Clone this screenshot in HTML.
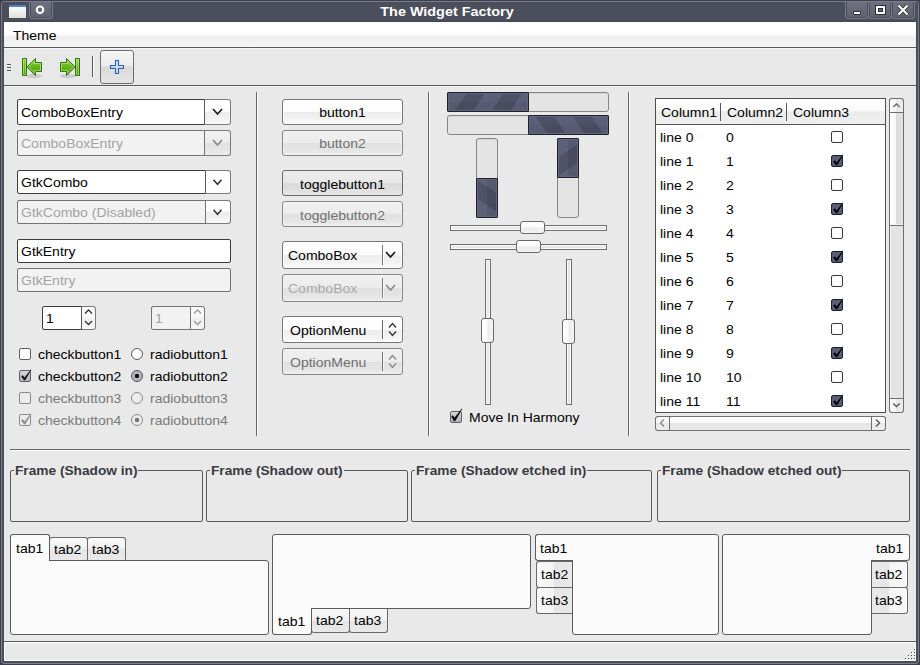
<!DOCTYPE html><html><head><meta charset="utf-8"><style>
*{box-sizing:border-box;margin:0;padding:0}
html,body{width:920px;height:665px;overflow:hidden}
body{position:relative;background:#4a4d5a;font-family:"Liberation Sans",sans-serif;font-size:14px;color:#000}
div{position:absolute}
.t{white-space:nowrap;line-height:16px;height:16px;transform:scaleY(0.88);transform-origin:0 13px}
svg{position:absolute;overflow:visible}
</style></head><body>
<div style="left:0px;top:0px;width:920px;height:665px;background:#3d404c"></div>
<div style="left:1px;top:1px;width:918px;height:663px;background:#4b4e5b;border:1px solid #7a7d89;border-radius:3px"></div>
<div style="left:4px;top:22px;width:912px;height:639px;background:#e9e9e9"></div>
<div style="left:3px;top:21px;width:914px;height:1px;background:#434652"></div>
<div class="t" style="left:296px;top:3px;width:302px;text-align:center;color:#fff;font-weight:bold;font-size:14.4px">The Widget Factory</div>
<div style="left:9px;top:5px;width:17px;height:13px;background:linear-gradient(#fbfbfb,#dedfd8);border-top:2px solid #5582c0"></div>
<div style="left:29px;top:2px;width:24px;height:17px;background:linear-gradient(#6e717d,#5e616e);border:1px solid #7a7d89;border-top:none;border-radius:0 0 4px 4px;box-shadow:inset 1px 0 #4a4d59,inset -1px 0 #4a4d59,inset 0 -1px #4a4d59"></div>
<svg style="left:0;top:0" width="60" height="22"><circle cx="40" cy="9.8" r="3.25" fill="none" stroke="#fff" stroke-width="2.1"/></svg>
<div style="left:845px;top:2px;width:24px;height:17px;background:linear-gradient(#6e717d,#5e616e);border:1px solid #7a7d89;border-top:none;border-radius:0 0 4px 4px;box-shadow:inset 1px 0 #4a4d59,inset -1px 0 #4a4d59,inset 0 -1px #4a4d59"></div>
<div style="left:868px;top:2px;width:24px;height:17px;background:linear-gradient(#6e717d,#5e616e);border:1px solid #7a7d89;border-top:none;border-radius:0 0 4px 4px;box-shadow:inset 1px 0 #4a4d59,inset -1px 0 #4a4d59,inset 0 -1px #4a4d59"></div>
<div style="left:891px;top:2px;width:24px;height:17px;background:linear-gradient(#6e717d,#5e616e);border:1px solid #7a7d89;border-top:none;border-radius:0 0 4px 4px;box-shadow:inset 1px 0 #4a4d59,inset -1px 0 #4a4d59,inset 0 -1px #4a4d59"></div>
<div style="left:853px;top:11px;width:8px;height:4px;background:#fff;border:1px solid #2a2c35;border-radius:1px"></div>
<div style="left:876px;top:6px;width:9px;height:8px;border:2px solid #fff;box-shadow:0 0 0 1px #2a2c35,inset 0 0 0 1px #2a2c35"></div>
<svg style="left:0;top:0" width="920" height="22"><path d="M898.5 5.5 L907.5 14.5 M907.5 5.5 L898.5 14.5" stroke="#2a2c35" stroke-width="3.8"/><path d="M898.5 5.5 L907.5 14.5 M907.5 5.5 L898.5 14.5" stroke="#fff" stroke-width="2.2"/></svg>
<div style="left:4px;top:22px;width:912px;height:25px;background:linear-gradient(#ffffff 0%,#ffffff 45%,#eeeeee 60%,#f4f4f4 100%)"></div>
<div style="left:4px;top:47px;width:912px;height:1px;background:#5b5b5b"></div>
<div class="t" style="left:13px;top:27px;">Theme</div>
<div style="left:4px;top:48px;width:912px;height:37px;background:#e8e8e8;border-top:1px solid #f6f6f6"></div>
<div style="left:4px;top:85px;width:912px;height:1px;background:#585858"></div>
<div style="left:4px;top:86px;width:912px;height:1px;background:#f3f3f3"></div>
<div style="left:7px;top:64px;width:4px;height:1px;background:#555"></div>
<div style="left:7px;top:67px;width:4px;height:1px;background:#555"></div>
<div style="left:7px;top:70px;width:4px;height:1px;background:#555"></div>
<svg style="left:0;top:0" width="140" height="90">
<defs><linearGradient id="ga" x1="0" y1="0" x2="0" y2="1"><stop offset="0" stop-color="#8fd64a"/><stop offset="0.5" stop-color="#62b51c"/><stop offset="1" stop-color="#4a9a0a"/></linearGradient></defs>
<ellipse cx="34" cy="76" rx="8" ry="2.2" fill="#000" opacity="0.12"/>
<ellipse cx="68" cy="76" rx="8" ry="2.2" fill="#000" opacity="0.12"/>
<path d="M22.5 58.5 H26.5 V75.5 H22.5 Z" fill="url(#ga)" stroke="#35700a" stroke-width="1"/>
<path d="M26.8 67 L35.5 58.5 V62.5 H41.5 V71.5 H35.5 V75.5 Z" fill="url(#ga)" stroke="#35700a" stroke-width="1"/>
<path d="M75.5 58.5 H79.5 V75.5 H75.5 Z" fill="url(#ga)" stroke="#35700a" stroke-width="1"/>
<path d="M75.2 67 L66.5 58.5 V62.5 H60.5 V71.5 H66.5 V75.5 Z" fill="url(#ga)" stroke="#35700a" stroke-width="1"/>
<path d="M23.5 59.5 H25.5 V74.5 H23.5 Z M28.3 67 L34.5 61 V63.5 H40.5 V70.5 H34.5 V73 Z M76.5 59.5 H78.5 V74.5 H76.5 Z M73.7 67 L67.5 61 V63.5 H61.5 V70.5 H67.5 V73 Z" fill="none" stroke="#c8ef9a" stroke-opacity="0.6" stroke-width="1"/>
</svg>
<div style="left:92px;top:56px;width:1px;height:21px;background:#5a5a5a"></div>
<div style="left:93px;top:56px;width:1px;height:21px;background:#f8f8f8"></div>
<div style="left:100px;top:50px;width:34px;height:34px;border:1px solid #6e6e6e;border-radius:3px;background:linear-gradient(#f6f6f6 0%,#ececec 45%,#d9d9d9 50%,#e4e4e4 100%)"></div>
<svg style="left:0;top:0" width="140" height="90">
<path d="M115.5 60.5 H118.5 V65.5 H123.5 V68.5 H118.5 V73.5 H115.5 V68.5 H110.5 V65.5 H115.5 Z" fill="#bcd3ef" stroke="#3063ad" stroke-width="1.1"/><path d="M116.5 66.5 H122.5 M117 61.5 V72.5" stroke="#e6f0fb" stroke-width="0.8" opacity="0.7"/>
</svg>
<div style="left:256px;top:92px;width:1px;height:344px;background:#666"></div>
<div style="left:257px;top:92px;width:1px;height:344px;background:#fcfcfc"></div>
<div style="left:428px;top:92px;width:1px;height:344px;background:#666"></div>
<div style="left:429px;top:92px;width:1px;height:344px;background:#fcfcfc"></div>
<div style="left:628px;top:92px;width:1px;height:344px;background:#666"></div>
<div style="left:629px;top:92px;width:1px;height:344px;background:#fcfcfc"></div>
<div style="left:10px;top:449px;width:900px;height:1px;background:#666"></div>
<div style="left:10px;top:450px;width:900px;height:1px;background:#fcfcfc"></div>
<div style="left:17px;top:99px;width:188px;height:26px;background:#fff;border:1px solid #3b3b3b;border-radius:2px;border-radius:2px 0 0 2px"></div>
<div style="left:204px;top:99px;width:27px;height:26px;border:1px solid #7a7a7a;border-left-color:#5a5a5a;border-radius:0 3px 3px 0;background:linear-gradient(#ffffff 0%,#fcfcfc 50%,#ececec 50%,#f1f1f1 75%,#fbfbfb 100%)"></div>
<div class="t" style="left:21px;top:104px;">ComboBoxEntry</div>
<svg style="left:0;top:0" width="1" height="1"><path d="M213.0 109.0 L217.5 114.0 L222.0 109.0" fill="none" stroke="#222" stroke-width="1.8"/></svg>
<div style="left:17px;top:130px;width:188px;height:26px;background:#f2f2f2;border:1px solid #737373;border-radius:2px;border-radius:2px 0 0 2px"></div>
<div style="left:204px;top:130px;width:27px;height:26px;border:1px solid #7b7b7b;border-left-color:#737373;border-radius:0 3px 3px 0;background:linear-gradient(#f0f0f0 0%,#ececec 50%,#e0e0e0 50%,#e4e4e4 75%,#ececec 100%)"></div>
<div class="t" style="left:21px;top:135px;color:#a3a3a3">ComboBoxEntry</div>
<svg style="left:0;top:0" width="1" height="1"><path d="M213.0 140.0 L217.5 145.0 L222.0 140.0" fill="none" stroke="#8a8a8a" stroke-width="1.8"/></svg>
<div style="left:17px;top:170px;width:189px;height:24px;background:#fff;border:1px solid #3b3b3b;border-radius:2px;border-radius:2px 0 0 2px"></div>
<div style="left:205px;top:170px;width:26px;height:24px;border:1px solid #7a7a7a;border-left-color:#5a5a5a;border-radius:0 3px 3px 0;background:#fdfdfd"></div>
<div class="t" style="left:21px;top:174px;">GtkCombo</div>
<svg style="left:0;top:0" width="1" height="1"><path d="M213.5 179.75 L217.5 184.25 L221.5 179.75" fill="none" stroke="#333" stroke-width="1.5"/></svg>
<div style="left:17px;top:200px;width:189px;height:24px;background:#f2f2f2;border:1px solid #737373;border-radius:2px;border-radius:2px 0 0 2px"></div>
<div style="left:205px;top:200px;width:26px;height:24px;border:1px solid #7b7b7b;border-left-color:#737373;border-radius:0 3px 3px 0;background:linear-gradient(#ffffff 0%,#fcfcfc 50%,#ececec 50%,#f1f1f1 75%,#fbfbfb 100%)"></div>
<div class="t" style="left:21px;top:204px;color:#a3a3a3">GtkCombo (Disabled)</div>
<svg style="left:0;top:0" width="1" height="1"><path d="M213.5 209.75 L217.5 214.25 L221.5 209.75" fill="none" stroke="#333" stroke-width="1.5"/></svg>
<div style="left:17px;top:239px;width:214px;height:24px;background:#fff;border:1px solid #3b3b3b;border-radius:2px"></div>
<div class="t" style="left:21px;top:243px;">GtkEntry</div>
<div style="left:17px;top:268px;width:214px;height:24px;background:#f2f2f2;border:1px solid #737373;border-radius:2px"></div>
<div class="t" style="left:21px;top:272px;color:#a3a3a3">GtkEntry</div>
<div style="left:42px;top:306px;width:40px;height:24px;background:#fff;border:1px solid #3b3b3b;border-radius:2px;border-radius:2px 0 0 2px"></div>
<div style="left:81px;top:306px;width:15px;height:24px;border:1px solid #7a7a7a;border-left-color:#5a5a5a;border-radius:0 3px 3px 0;background:linear-gradient(#fcfcfc 0%,#f8f8f8 50%,#efefef 50%,#f6f6f6 100%)"></div>
<div class="t" style="left:46px;top:310px;">1</div>
<svg style="left:0;top:0" width="1" height="1"><path d="M85 313.5 L88.5 310 L92 313.5" fill="none" stroke="#333" stroke-width="1.3"/><path d="M85 321 L88.5 324.5 L92 321" fill="none" stroke="#333" stroke-width="1.3"/></svg>
<div style="left:151px;top:306px;width:40px;height:24px;background:#f2f2f2;border:1px solid #737373;border-radius:2px;border-radius:2px 0 0 2px"></div>
<div style="left:190px;top:306px;width:15px;height:24px;border:1px solid #7a7a7a;border-left-color:#737373;border-radius:0 3px 3px 0;background:linear-gradient(#fcfcfc 0%,#f8f8f8 50%,#efefef 50%,#f6f6f6 100%)"></div>
<div class="t" style="left:155px;top:310px;color:#a3a3a3">1</div>
<svg style="left:0;top:0" width="1" height="1"><path d="M194 313.5 L197.5 310 L201 313.5" fill="none" stroke="#999" stroke-width="1.3"/><path d="M194 321 L197.5 324.5 L201 321" fill="none" stroke="#999" stroke-width="1.3"/></svg>
<div style="left:19px;top:348px;width:12px;height:12px;border:1px solid #606060;border-radius:2px;background:#fff"></div>
<div class="t" style="left:38px;top:346px;">checkbutton1</div>
<svg style="left:0;top:0" width="1" height="1"><defs><radialGradient id="rg"><stop offset="0" stop-color="#d8d8dd"/><stop offset="1" stop-color="#a9a9b3"/></radialGradient></defs><circle cx="137" cy="354" r="5.5" fill="#fff" stroke="#5a5a5a" stroke-width="1"/></svg>
<div class="t" style="left:150px;top:346px;">radiobutton1</div>
<div style="left:19px;top:370px;width:12px;height:12px;border:1px solid #606060;border-radius:2px;background:linear-gradient(#d6d6dc,#b3b3bd)"></div>
<svg style="left:0;top:0" width="1" height="1"><path d="M21.2 376.6 L22.6 375.2 L24.6 377.4 L30.8 369.4 L31.4 369.7 L25.2 380.2 L24 380.2 Z" fill="#111"/></svg>
<div class="t" style="left:38px;top:368px;">checkbutton2</div>
<svg style="left:0;top:0" width="1" height="1"><defs><radialGradient id="rg"><stop offset="0" stop-color="#d8d8dd"/><stop offset="1" stop-color="#a9a9b3"/></radialGradient></defs><circle cx="137" cy="376" r="5.5" fill="url(#rg)" stroke="#5a5a5a" stroke-width="1"/><circle cx="137" cy="376" r="2.3" fill="#111"/></svg>
<div class="t" style="left:150px;top:368px;">radiobutton2</div>
<div style="left:19px;top:392px;width:12px;height:12px;border:1px solid #8a8a8a;border-radius:2px;background:#ededed"></div>
<div class="t" style="left:38px;top:390px;color:#7a7a7a">checkbutton3</div>
<svg style="left:0;top:0" width="1" height="1"><defs><radialGradient id="rg"><stop offset="0" stop-color="#d8d8dd"/><stop offset="1" stop-color="#a9a9b3"/></radialGradient></defs><circle cx="137" cy="398" r="5.5" fill="#ededed" stroke="#8a8a8a" stroke-width="1"/></svg>
<div class="t" style="left:150px;top:390px;color:#7a7a7a">radiobutton3</div>
<div style="left:19px;top:414px;width:12px;height:12px;border:1px solid #8a8a8a;border-radius:2px;background:#ececec"></div>
<svg style="left:0;top:0" width="1" height="1"><path d="M21.2 420.6 L22.6 419.2 L24.6 421.4 L30.8 413.4 L31.4 413.7 L25.2 424.2 L24 424.2 Z" fill="#888"/></svg>
<div class="t" style="left:38px;top:412px;color:#7a7a7a">checkbutton4</div>
<svg style="left:0;top:0" width="1" height="1"><defs><radialGradient id="rg"><stop offset="0" stop-color="#d8d8dd"/><stop offset="1" stop-color="#a9a9b3"/></radialGradient></defs><circle cx="137" cy="420" r="5.5" fill="#ededed" stroke="#8a8a8a" stroke-width="1"/><circle cx="137" cy="420" r="2.3" fill="#777"/></svg>
<div class="t" style="left:150px;top:412px;color:#7a7a7a">radiobutton4</div>
<div style="left:282px;top:99px;width:121px;height:26px;border:1px solid #777;border-radius:3px;background:linear-gradient(#ffffff 0%,#fcfcfc 50%,#ececec 50%,#f1f1f1 75%,#fbfbfb 100%);box-shadow:inset 0 0 0 1px rgba(255,255,255,0.7)"></div>
<div class="t" style="left:282px;top:104px;width:121px;text-align:center;">button1</div>
<div style="left:282px;top:130px;width:121px;height:26px;border:1px solid #858585;border-radius:3px;background:linear-gradient(#f0f0f0 0%,#ececec 50%,#e0e0e0 50%,#e4e4e4 75%,#ececec 100%);box-shadow:inset 0 0 0 1px rgba(255,255,255,0.35)"></div>
<div class="t" style="left:282px;top:135px;width:121px;text-align:center;color:#707070">button2</div>
<div style="left:282px;top:170px;width:121px;height:26px;border:1px solid #6a6a6a;border-radius:3px;background:linear-gradient(#ececec 0%,#e8e8e8 50%,#d9d9d9 50%,#dedede 75%,#e8e8e8 100%)"></div>
<div class="t" style="left:282px;top:176px;width:121px;text-align:center;">togglebutton1</div>
<div style="left:282px;top:201px;width:121px;height:26px;border:1px solid #858585;border-radius:3px;background:linear-gradient(#f0f0f0 0%,#ececec 50%,#e0e0e0 50%,#e4e4e4 75%,#ececec 100%);box-shadow:inset 0 0 0 1px rgba(255,255,255,0.35)"></div>
<div class="t" style="left:282px;top:207px;width:121px;text-align:center;color:#707070">togglebutton2</div>
<div style="left:282px;top:241px;width:121px;height:28px;border:1px solid #777;border-radius:3px;background:linear-gradient(#ffffff 0%,#fcfcfc 50%,#ececec 50%,#f1f1f1 75%,#fbfbfb 100%);box-shadow:inset 0 0 0 1px rgba(255,255,255,0.7)"></div>
<div class="t" style="left:288px;top:247px;">ComboBox</div>
<div style="left:382px;top:245px;width:1px;height:20px;background:#777"></div>
<div style="left:383px;top:245px;width:1px;height:20px;background:#fff"></div>
<svg style="left:0;top:0" width="1" height="1"><path d="M386.0 252.0 L390.5 257.0 L395.0 252.0" fill="none" stroke="#222" stroke-width="1.8"/></svg>
<div style="left:282px;top:274px;width:121px;height:28px;border:1px solid #858585;border-radius:3px;background:linear-gradient(#f0f0f0 0%,#ececec 50%,#e0e0e0 50%,#e4e4e4 75%,#ececec 100%);box-shadow:inset 0 0 0 1px rgba(255,255,255,0.35)"></div>
<div class="t" style="left:288px;top:280px;color:#a8a8a8">ComboBox</div>
<div style="left:382px;top:278px;width:1px;height:20px;background:#808080"></div>
<div style="left:383px;top:278px;width:1px;height:20px;background:#f4f4f4"></div>
<svg style="left:0;top:0" width="1" height="1"><path d="M386.0 285.0 L390.5 290.0 L395.0 285.0" fill="none" stroke="#888" stroke-width="1.6"/></svg>
<div style="left:282px;top:316px;width:121px;height:27px;border:1px solid #777;border-radius:3px;background:linear-gradient(#ffffff 0%,#fcfcfc 50%,#ececec 50%,#f1f1f1 75%,#fbfbfb 100%);box-shadow:inset 0 0 0 1px rgba(255,255,255,0.7)"></div>
<div class="t" style="left:290px;top:322px;">OptionMenu</div>
<div style="left:382px;top:320px;width:1px;height:19px;background:#666"></div>
<div style="left:383px;top:320px;width:1px;height:19px;background:#fff"></div>
<svg style="left:0;top:0" width="1" height="1"><path d="M389 327.5 L392.5 323.5 L396 327.5 M389 331.5 L392.5 335.5 L396 331.5" fill="none" stroke="#333" stroke-width="1.3"/></svg>
<div style="left:282px;top:348px;width:121px;height:27px;border:1px solid #858585;border-radius:3px;background:linear-gradient(#f0f0f0 0%,#ececec 50%,#e0e0e0 50%,#e4e4e4 75%,#ececec 100%);box-shadow:inset 0 0 0 1px rgba(255,255,255,0.35)"></div>
<div class="t" style="left:290px;top:354px;color:#707070">OptionMenu</div>
<div style="left:382px;top:352px;width:1px;height:19px;background:#777"></div>
<div style="left:383px;top:352px;width:1px;height:19px;background:#f4f4f4"></div>
<svg style="left:0;top:0" width="1" height="1"><path d="M389 359.5 L392.5 355.5 L396 359.5 M389 363.5 L392.5 367.5 L396 363.5" fill="none" stroke="#888" stroke-width="1.3"/></svg>
<div style="left:447px;top:92px;width:162px;height:20px;background:#e4e4e4;border:1px solid #858585;border-radius:3px;box-shadow:inset 0 1px #d8d8d8"></div>
<div style="left:447px;top:92px;width:82px;height:20px;background:linear-gradient(rgba(255,255,255,0.02) 50%,rgba(0,0,0,0.02) 50%),repeating-linear-gradient(124deg,#585c74 0px,#585c74 15.4px,#4a4d62 15.4px,#4a4d62 30.8px);border:1px solid #1f2027;border-radius:1px;box-shadow:inset 0 0 0 1px #62667e"></div>
<div style="left:447px;top:115px;width:162px;height:20px;background:#e4e4e4;border:1px solid #858585;border-radius:3px;box-shadow:inset 0 1px #d8d8d8"></div>
<div style="left:528px;top:115px;width:81px;height:20px;background:linear-gradient(rgba(255,255,255,0.02) 50%,rgba(0,0,0,0.02) 50%),repeating-linear-gradient(56deg,#585c74 0px,#585c74 15.4px,#4a4d62 15.4px,#4a4d62 30.8px);border:1px solid #1f2027;border-radius:1px;box-shadow:inset 0 0 0 1px #62667e"></div>
<div style="left:476px;top:138px;width:22px;height:80px;background:#e4e4e4;border:1px solid #858585;border-radius:3px;box-shadow:inset 0 1px #d8d8d8"></div>
<div style="left:476px;top:178px;width:22px;height:40px;background:linear-gradient(90deg,rgba(255,255,255,0.03) 50%,rgba(0,0,0,0.03) 50%),repeating-linear-gradient(34deg,#585c74 0px,#585c74 15.4px,#4a4d62 15.4px,#4a4d62 30.8px);border:1px solid #1f2027;border-radius:1px;box-shadow:inset 0 0 0 1px #62667e"></div>
<div style="left:557px;top:138px;width:22px;height:80px;background:#e4e4e4;border:1px solid #858585;border-radius:3px;box-shadow:inset 0 1px #d8d8d8"></div>
<div style="left:557px;top:138px;width:22px;height:40px;background:linear-gradient(90deg,rgba(255,255,255,0.03) 50%,rgba(0,0,0,0.03) 50%),repeating-linear-gradient(146deg,#585c74 0px,#585c74 15.4px,#4a4d62 15.4px,#4a4d62 30.8px);border:1px solid #1f2027;border-radius:1px;box-shadow:inset 0 0 0 1px #62667e"></div>
<div style="left:450px;top:225px;width:157px;height:6px;background:#e8e8e8;border:1px solid #6e6e6e;box-shadow:inset 0 0 0 1px #fafafa"></div>
<div style="left:520px;top:221px;width:25px;height:13px;border:1px solid #6a6a6a;border-radius:3px;background:linear-gradient(#ffffff 0%,#fbfbfb 45%,#ececec 55%,#f4f4f4 100%)"></div>
<div style="left:450px;top:244px;width:157px;height:6px;background:#e8e8e8;border:1px solid #6e6e6e;box-shadow:inset 0 0 0 1px #fafafa"></div>
<div style="left:516px;top:240px;width:25px;height:13px;border:1px solid #6a6a6a;border-radius:3px;background:linear-gradient(#ffffff 0%,#fbfbfb 45%,#ececec 55%,#f4f4f4 100%)"></div>
<div style="left:485px;top:259px;width:6px;height:146px;background:#e8e8e8;border:1px solid #6e6e6e;box-shadow:inset 0 0 0 1px #fafafa"></div>
<div style="left:481px;top:318px;width:13px;height:25px;border:1px solid #6a6a6a;border-radius:3px;background:linear-gradient(90deg,#ffffff 0%,#fbfbfb 45%,#ececec 55%,#f4f4f4 100%)"></div>
<div style="left:566px;top:259px;width:6px;height:146px;background:#e8e8e8;border:1px solid #6e6e6e;box-shadow:inset 0 0 0 1px #fafafa"></div>
<div style="left:562px;top:319px;width:13px;height:25px;border:1px solid #6a6a6a;border-radius:3px;background:linear-gradient(90deg,#ffffff 0%,#fbfbfb 45%,#ececec 55%,#f4f4f4 100%)"></div>
<div style="left:450px;top:411px;width:12px;height:12px;border:1px solid #606060;border-radius:2px;background:linear-gradient(#d6d6dc,#b3b3bd)"></div>
<svg style="left:0;top:0" width="1" height="1"><path d="M451.2 416.6 L452.6 415.2 L454.6 417.4 L461.8 408.4 L462.4 408.7 L455.2 421.2 L454 421.2 Z" fill="#111"/></svg>
<div class="t" style="left:469px;top:409px;">Move In Harmony</div>
<div style="left:655px;top:98px;width:231px;height:315px;background:#fff;border:1px solid #4f4f4f"></div>
<div style="left:656px;top:99px;width:229px;height:25px;background:linear-gradient(#ffffff 0%,#fbfbfb 45%,#ececec 52%,#efefef 100%)"></div>
<div style="left:656px;top:124px;width:229px;height:1px;background:#555"></div>
<div style="left:720px;top:103px;width:1px;height:18px;background:#555"></div>
<div style="left:786px;top:103px;width:1px;height:18px;background:#555"></div>
<div class="t" style="left:661px;top:104px;">Column1</div>
<div class="t" style="left:727px;top:104px;">Column2</div>
<div class="t" style="left:793px;top:104px;">Column3</div>
<div class="t" style="left:660px;top:129px;">line 0</div>
<div class="t" style="left:726px;top:129px;">0</div>
<div style="left:831px;top:131px;width:12px;height:12px;background:#fff;border:1px solid #3a3a3a;border-radius:2px"></div>
<div class="t" style="left:660px;top:153px;">line 1</div>
<div class="t" style="left:726px;top:153px;">1</div>
<div style="left:831px;top:155px;width:12px;height:12px;background:#595d78;border:1px solid #1e1f25;border-radius:2px"></div>
<svg style="left:0;top:0" width="1" height="1"><path d="M833.2 161.6 L834.6 160.2 L836.6 162.4 L842.8 154.4 L843.4 154.7 L837.2 165.2 L836 165.2 Z" fill="#000"/></svg>
<div class="t" style="left:660px;top:177px;">line 2</div>
<div class="t" style="left:726px;top:177px;">2</div>
<div style="left:831px;top:179px;width:12px;height:12px;background:#fff;border:1px solid #3a3a3a;border-radius:2px"></div>
<div class="t" style="left:660px;top:201px;">line 3</div>
<div class="t" style="left:726px;top:201px;">3</div>
<div style="left:831px;top:203px;width:12px;height:12px;background:#595d78;border:1px solid #1e1f25;border-radius:2px"></div>
<svg style="left:0;top:0" width="1" height="1"><path d="M833.2 209.6 L834.6 208.2 L836.6 210.4 L842.8 202.4 L843.4 202.7 L837.2 213.2 L836 213.2 Z" fill="#000"/></svg>
<div class="t" style="left:660px;top:225px;">line 4</div>
<div class="t" style="left:726px;top:225px;">4</div>
<div style="left:831px;top:227px;width:12px;height:12px;background:#fff;border:1px solid #3a3a3a;border-radius:2px"></div>
<div class="t" style="left:660px;top:249px;">line 5</div>
<div class="t" style="left:726px;top:249px;">5</div>
<div style="left:831px;top:251px;width:12px;height:12px;background:#595d78;border:1px solid #1e1f25;border-radius:2px"></div>
<svg style="left:0;top:0" width="1" height="1"><path d="M833.2 257.6 L834.6 256.2 L836.6 258.4 L842.8 250.4 L843.4 250.7 L837.2 261.2 L836 261.2 Z" fill="#000"/></svg>
<div class="t" style="left:660px;top:273px;">line 6</div>
<div class="t" style="left:726px;top:273px;">6</div>
<div style="left:831px;top:275px;width:12px;height:12px;background:#fff;border:1px solid #3a3a3a;border-radius:2px"></div>
<div class="t" style="left:660px;top:297px;">line 7</div>
<div class="t" style="left:726px;top:297px;">7</div>
<div style="left:831px;top:299px;width:12px;height:12px;background:#595d78;border:1px solid #1e1f25;border-radius:2px"></div>
<svg style="left:0;top:0" width="1" height="1"><path d="M833.2 305.6 L834.6 304.2 L836.6 306.4 L842.8 298.4 L843.4 298.7 L837.2 309.2 L836 309.2 Z" fill="#000"/></svg>
<div class="t" style="left:660px;top:321px;">line 8</div>
<div class="t" style="left:726px;top:321px;">8</div>
<div style="left:831px;top:323px;width:12px;height:12px;background:#fff;border:1px solid #3a3a3a;border-radius:2px"></div>
<div class="t" style="left:660px;top:345px;">line 9</div>
<div class="t" style="left:726px;top:345px;">9</div>
<div style="left:831px;top:347px;width:12px;height:12px;background:#595d78;border:1px solid #1e1f25;border-radius:2px"></div>
<svg style="left:0;top:0" width="1" height="1"><path d="M833.2 353.6 L834.6 352.2 L836.6 354.4 L842.8 346.4 L843.4 346.7 L837.2 357.2 L836 357.2 Z" fill="#000"/></svg>
<div class="t" style="left:660px;top:369px;">line 10</div>
<div class="t" style="left:726px;top:369px;">10</div>
<div style="left:831px;top:371px;width:12px;height:12px;background:#fff;border:1px solid #3a3a3a;border-radius:2px"></div>
<div class="t" style="left:660px;top:393px;">line 11</div>
<div class="t" style="left:726px;top:393px;">11</div>
<div style="left:831px;top:395px;width:12px;height:12px;background:#595d78;border:1px solid #1e1f25;border-radius:2px"></div>
<svg style="left:0;top:0" width="1" height="1"><path d="M833.2 401.6 L834.6 400.2 L836.6 402.4 L842.8 394.4 L843.4 394.7 L837.2 405.2 L836 405.2 Z" fill="#000"/></svg>
<div style="left:889px;top:98px;width:15px;height:315px;background:#e3e3e3;border:1px solid #6f6f6f;border-radius:3px;box-shadow:inset 1px 0 #f4f4f4"></div>
<div style="left:889px;top:98px;width:15px;height:15px;border:1px solid #6f6f6f;background:linear-gradient(90deg,#fbfbfb 0%,#f5f5f5 50%,#e8e8e8 50%,#ececec 100%);border-radius:3px 3px 0 0"></div>
<div style="left:889px;top:112px;width:15px;height:114px;border:1px solid #6f6f6f;background:linear-gradient(90deg,#ffffff 0%,#f5f5f5 50%,#dcdcdc 50%,#e2e2e2 100%);box-shadow:inset 0 -1px #f8f8f8"></div>
<div style="left:889px;top:398px;width:15px;height:15px;border:1px solid #6f6f6f;background:linear-gradient(90deg,#fbfbfb 0%,#f5f5f5 50%,#e8e8e8 50%,#ececec 100%);border-radius:0 0 3px 3px"></div>
<svg style="left:0;top:0" width="1" height="1"><path d="M893.3 107 L896.5 104 L899.7 107" fill="none" stroke="#666" stroke-width="1.3"/><path d="M893.3 403.5 L896.5 406.5 L899.7 403.5" fill="none" stroke="#555" stroke-width="1.3"/></svg>
<div style="left:655px;top:416px;width:231px;height:15px;background:#e3e3e3;border:1px solid #6f6f6f;border-radius:3px"></div>
<div style="left:655px;top:416px;width:15px;height:15px;border:1px solid #6f6f6f;background:linear-gradient(#fdfdfd 0%,#f6f6f6 50%,#e9e9e9 50%,#ededed 100%);border-radius:3px 0 0 3px"></div>
<div style="left:669px;top:416px;width:203px;height:15px;border:1px solid #6f6f6f;background:linear-gradient(#ffffff 0%,#f6f6f6 50%,#e6e6e6 50%,#e9e9e9 100%)"></div>
<div style="left:871px;top:416px;width:15px;height:15px;border:1px solid #6f6f6f;background:linear-gradient(#fdfdfd 0%,#f6f6f6 50%,#e9e9e9 50%,#ededed 100%);border-radius:0 3px 3px 0"></div>
<svg style="left:0;top:0" width="1" height="1"><path d="M664 419.5 L660.5 423 L664 426.5" fill="none" stroke="#888" stroke-width="1.4"/><path d="M876 419.5 L879.5 423 L876 426.5" fill="none" stroke="#555" stroke-width="1.4"/></svg>
<div style="left:10px;top:470px;width:193px;height:52px;border:1px solid #5a5a5a;border-radius:2px"></div>
<div class="t" style="left:14px;top:463px;padding:0 1px;background:#e9e9e9;font-weight:bold;font-size:13.7px;color:#3a3a40">Frame (Shadow in)</div>
<div style="left:206px;top:470px;width:202px;height:52px;border:1px solid #5a5a5a;border-radius:2px"></div>
<div class="t" style="left:210px;top:463px;padding:0 1px;background:#e9e9e9;font-weight:bold;font-size:13.7px;color:#3a3a40">Frame (Shadow out)</div>
<div style="left:411px;top:470px;width:241px;height:52px;border:1px solid #5a5a5a;border-radius:2px"></div>
<div class="t" style="left:415px;top:463px;padding:0 1px;background:#e9e9e9;font-weight:bold;font-size:13.7px;color:#3a3a40">Frame (Shadow etched in)</div>
<div style="left:657px;top:470px;width:253px;height:52px;border:1px solid #5a5a5a;border-radius:2px"></div>
<div class="t" style="left:661px;top:463px;padding:0 1px;background:#e9e9e9;font-weight:bold;font-size:13.7px;color:#3a3a40">Frame (Shadow etched out)</div>
<div style="left:10px;top:560px;width:259px;height:75px;background:#fbfbfb;border:1px solid #5c5c5c;border-radius:3px;border-top-left-radius:0"></div>
<div style="left:49px;top:537px;width:39px;height:23px;border:1px solid #6a6a6a;background:linear-gradient(#f8f8f8 0%,#f1f1f1 50%,#e5e5e5 50%,#e9e9e9 100%);border-radius:3px 3px 0 0;border-bottom:none"></div>
<div style="left:87px;top:537px;width:39px;height:23px;border:1px solid #6a6a6a;background:linear-gradient(#f8f8f8 0%,#f1f1f1 50%,#e5e5e5 50%,#e9e9e9 100%);border-radius:3px 3px 0 0;border-bottom:none"></div>
<div style="left:10px;top:534px;width:40px;height:27px;background:#fbfbfb;border:1px solid #5c5c5c;border-bottom:none;border-radius:3px 3px 0 0"></div>
<div style="left:11px;top:560px;width:38px;height:1px;background:#fbfbfb"></div>
<div class="t" style="left:16px;top:540px;">tab1</div>
<div class="t" style="left:54px;top:541px;">tab2</div>
<div class="t" style="left:92px;top:541px;">tab3</div>
<div style="left:272px;top:534px;width:259px;height:75px;background:#fbfbfb;border:1px solid #5c5c5c;border-radius:3px;border-bottom-left-radius:0"></div>
<div style="left:311px;top:609px;width:39px;height:24px;border:1px solid #6a6a6a;background:linear-gradient(#f8f8f8 0%,#f1f1f1 50%,#e5e5e5 50%,#e9e9e9 100%);border-radius:0 0 3px 3px;border-top:none"></div>
<div style="left:349px;top:609px;width:39px;height:24px;border:1px solid #6a6a6a;background:linear-gradient(#f8f8f8 0%,#f1f1f1 50%,#e5e5e5 50%,#e9e9e9 100%);border-radius:0 0 3px 3px;border-top:none"></div>
<div style="left:272px;top:608px;width:40px;height:27px;background:#fbfbfb;border:1px solid #5c5c5c;border-top:none;border-radius:0 0 3px 3px"></div>
<div style="left:273px;top:608px;width:38px;height:1px;background:#fbfbfb"></div>
<div class="t" style="left:278px;top:613px;">tab1</div>
<div class="t" style="left:316px;top:612px;">tab2</div>
<div class="t" style="left:354px;top:612px;">tab3</div>
<div style="left:572px;top:534px;width:147px;height:101px;background:#fbfbfb;border:1px solid #5c5c5c;border-radius:3px;border-top-left-radius:0"></div>
<div style="left:536px;top:561px;width:36px;height:27px;border:1px solid #6a6a6a;background:linear-gradient(90deg,#fafafa 0%,#f3f3f3 50%,#e5e5e5 50%,#e9e9e9 100%);border-radius:3px 0 0 3px;border-right:none"></div>
<div style="left:536px;top:587px;width:36px;height:27px;border:1px solid #6a6a6a;background:linear-gradient(90deg,#fafafa 0%,#f3f3f3 50%,#e5e5e5 50%,#e9e9e9 100%);border-radius:3px 0 0 3px;border-right:none"></div>
<div style="left:535px;top:534px;width:38px;height:27px;background:#fbfbfb;border:1px solid #5c5c5c;border-right:none;border-radius:3px 0 0 3px"></div>
<div style="left:572px;top:535px;width:1px;height:25px;background:#fbfbfb"></div>
<div class="t" style="left:540px;top:540px;">tab1</div>
<div class="t" style="left:541px;top:566px;">tab2</div>
<div class="t" style="left:541px;top:592px;">tab3</div>
<div style="left:722px;top:534px;width:150px;height:101px;background:#fbfbfb;border:1px solid #5c5c5c;border-radius:3px;border-top-right-radius:0"></div>
<div style="left:872px;top:561px;width:36px;height:27px;border:1px solid #6a6a6a;background:linear-gradient(90deg,#e9e9e9 0%,#e5e5e5 50%,#f3f3f3 50%,#fafafa 100%);border-radius:0 3px 3px 0;border-left:none"></div>
<div style="left:872px;top:587px;width:36px;height:27px;border:1px solid #6a6a6a;background:linear-gradient(90deg,#e9e9e9 0%,#e5e5e5 50%,#f3f3f3 50%,#fafafa 100%);border-radius:0 3px 3px 0;border-left:none"></div>
<div style="left:871px;top:534px;width:39px;height:27px;background:#fbfbfb;border:1px solid #5c5c5c;border-left:none;border-radius:0 3px 3px 0"></div>
<div style="left:871px;top:535px;width:1px;height:25px;background:#fbfbfb"></div>
<div class="t" style="left:876px;top:540px;">tab1</div>
<div class="t" style="left:875px;top:566px;">tab2</div>
<div class="t" style="left:875px;top:592px;">tab3</div>
<div style="left:4px;top:641px;width:912px;height:1px;background:#5a5a5a"></div>
<div style="left:4px;top:642px;width:912px;height:1px;background:#fdfdfd"></div>
<div style="left:4px;top:643px;width:1px;height:18px;background:#fdfdfd"></div>
<div style="left:4px;top:660px;width:912px;height:1px;background:#fdfdfd"></div>
<div style="left:915px;top:643px;width:1px;height:18px;background:#fdfdfd"></div>
<div style="left:914px;top:649px;width:1px;height:1px;background:#4a4a4a;box-shadow:1px 1px 0 #fff,0 0 0.6px #4a4a4a"></div>
<div style="left:914px;top:652px;width:1px;height:1px;background:#4a4a4a;box-shadow:1px 1px 0 #fff,0 0 0.6px #4a4a4a"></div>
<div style="left:911px;top:652px;width:1px;height:1px;background:#4a4a4a;box-shadow:1px 1px 0 #fff,0 0 0.6px #4a4a4a"></div>
<div style="left:914px;top:655px;width:1px;height:1px;background:#4a4a4a;box-shadow:1px 1px 0 #fff,0 0 0.6px #4a4a4a"></div>
<div style="left:911px;top:655px;width:1px;height:1px;background:#4a4a4a;box-shadow:1px 1px 0 #fff,0 0 0.6px #4a4a4a"></div>
<div style="left:908px;top:655px;width:1px;height:1px;background:#4a4a4a;box-shadow:1px 1px 0 #fff,0 0 0.6px #4a4a4a"></div>
<div style="left:914px;top:658px;width:1px;height:1px;background:#4a4a4a;box-shadow:1px 1px 0 #fff,0 0 0.6px #4a4a4a"></div>
<div style="left:911px;top:658px;width:1px;height:1px;background:#4a4a4a;box-shadow:1px 1px 0 #fff,0 0 0.6px #4a4a4a"></div>
<div style="left:908px;top:658px;width:1px;height:1px;background:#4a4a4a;box-shadow:1px 1px 0 #fff,0 0 0.6px #4a4a4a"></div>
<div style="left:905px;top:658px;width:1px;height:1px;background:#4a4a4a;box-shadow:1px 1px 0 #fff,0 0 0.6px #4a4a4a"></div>
</body></html>
